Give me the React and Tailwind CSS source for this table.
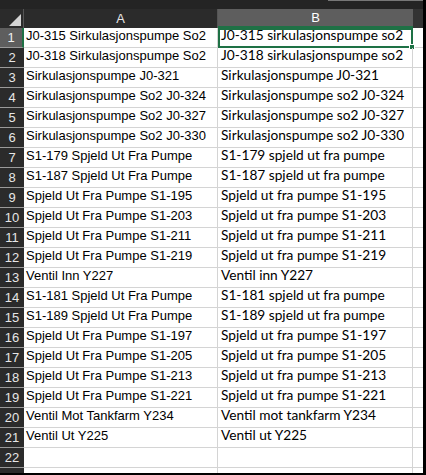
const rows = [
  ['J0-315 Sirkulasjonspumpe So2', 'J0-315 sirkulasjonspumpe so2'],
  ['J0-318 Sirkulasjonspumpe So2', 'J0-318 sirkulasjonspumpe so2'],
  ['Sirkulasjonspumpe J0-321', 'Sirkulasjonspumpe J0-321'],
  ['Sirkulasjonspumpe So2 J0-324', 'Sirkulasjonspumpe so2 J0-324'],
  ['Sirkulasjonspumpe So2 J0-327', 'Sirkulasjonspumpe so2 J0-327'],
  ['Sirkulasjonspumpe So2 J0-330', 'Sirkulasjonspumpe so2 J0-330'],
  ['S1-179 Spjeld Ut Fra Pumpe', 'S1-179 spjeld ut fra pumpe'],
  ['S1-187 Spjeld Ut Fra Pumpe', 'S1-187 spjeld ut fra pumpe'],
  ['Spjeld Ut Fra Pumpe S1-195', 'Spjeld ut fra pumpe S1-195'],
  ['Spjeld Ut Fra Pumpe S1-203', 'Spjeld ut fra pumpe S1-203'],
  ['Spjeld Ut Fra Pumpe S1-211', 'Spjeld ut fra pumpe S1-211'],
  ['Spjeld Ut Fra Pumpe S1-219', 'Spjeld ut fra pumpe S1-219'],
  ['Ventil Inn Y227', 'Ventil inn Y227'],
  ['S1-181 Spjeld Ut Fra Pumpe', 'S1-181 spjeld ut fra pumpe'],
  ['S1-189 Spjeld Ut Fra Pumpe', 'S1-189 spjeld ut fra pumpe'],
  ['Spjeld Ut Fra Pumpe S1-197', 'Spjeld ut fra pumpe S1-197'],
  ['Spjeld Ut Fra Pumpe S1-205', 'Spjeld ut fra pumpe S1-205'],
  ['Spjeld Ut Fra Pumpe S1-213', 'Spjeld ut fra pumpe S1-213'],
  ['Spjeld Ut Fra Pumpe S1-221', 'Spjeld ut fra pumpe S1-221'],
  ['Ventil Mot Tankfarm Y234', 'Ventil mot tankfarm Y234'],
  ['Ventil Ut Y225', 'Ventil ut Y225'],
  ['', ''],
];

const arial = { fontFamily: '"Liberation Sans", Arial, sans-serif' };

export default function App() {
  return (
    <div className="w-[426px] h-[475px] bg-black overflow-hidden">
      <div className="w-[423px] h-[473px] bg-white flex flex-col overflow-hidden">
        {/* top strip */}
        <div className="h-[9px] bg-[#242424] flex">
          <div className="w-[328px]" />
          <div className="flex-1 h-[2px] border-t border-[#777]" />
        </div>

        {/* column headers */}
        <div className="h-[19px] flex bg-[#2b2b2b] font-['Liberation_Sans',sans-serif] text-[13px] text-[#e6e6e6]">
          <div className="w-[24px] border-r border-[#555] relative">
            <svg width="12" height="12" className="absolute right-[2px] bottom-[2px]">
              <polygon points="12,0 12,12 0,12" fill="#d4d4d4" />
            </svg>
          </div>
          <div className="w-[194px] flex items-center justify-center border-r border-[#555]">A</div>
          <div className="w-[195px] flex items-center justify-center bg-[#5e5e5e] text-white border-b-2 border-[#1e7145]">B</div>
          <div className="flex-1 bg-[#333]" />
        </div>

        {rows.map(([a, b], i) => (
          <div key={i} className="h-[20px] flex shrink-0">
            <div
              className={`w-[24px] shrink-0 flex items-center justify-center text-[13px] leading-[15px] border-b border-[#9a9a9a] ${
                i === 0 ? 'bg-[#5e5e5e] text-[#eee] border-r-2 border-r-[#1e7145]' : 'bg-[#2b2b2b] text-[#e6e6e6]'
              }`}
              style={arial}
            >
              {i + 1}
            </div>
            <div
              className="w-[194px] shrink-0 border-r border-b border-[#d4d4d4] pl-[2px] flex items-end pb-[4px] text-[13px] leading-[15px] text-black whitespace-nowrap"
              style={arial}
            >
              {a}
            </div>
            <div
              className={`w-[195px] shrink-0 border-b border-r border-[#d4d4d4] pl-[3px] flex items-end pb-[4px] text-[13.7px] leading-[16px] text-black whitespace-nowrap relative font-['Lato',sans-serif] ${
                i === 0 ? 'outline-2 outline-[#1e7145] -outline-offset-2' : ''
              }`}
            >
              {b}
              {i === 0 && <span className="absolute right-[-3px] bottom-[-3px] w-[6px] h-[6px] bg-[#1e7145] border border-white" />}
            </div>
            <div className="flex-1 border-b border-[#d4d4d4]" />
          </div>
        ))}
        <div className="flex flex-1">
          <div className="w-[24px] bg-[#2b2b2b]" />
          <div className="w-[194px] border-r border-[#d4d4d4]" />
          <div className="w-[195px] border-r border-[#d4d4d4]" />
        </div>
      </div>
    </div>
  );
}
